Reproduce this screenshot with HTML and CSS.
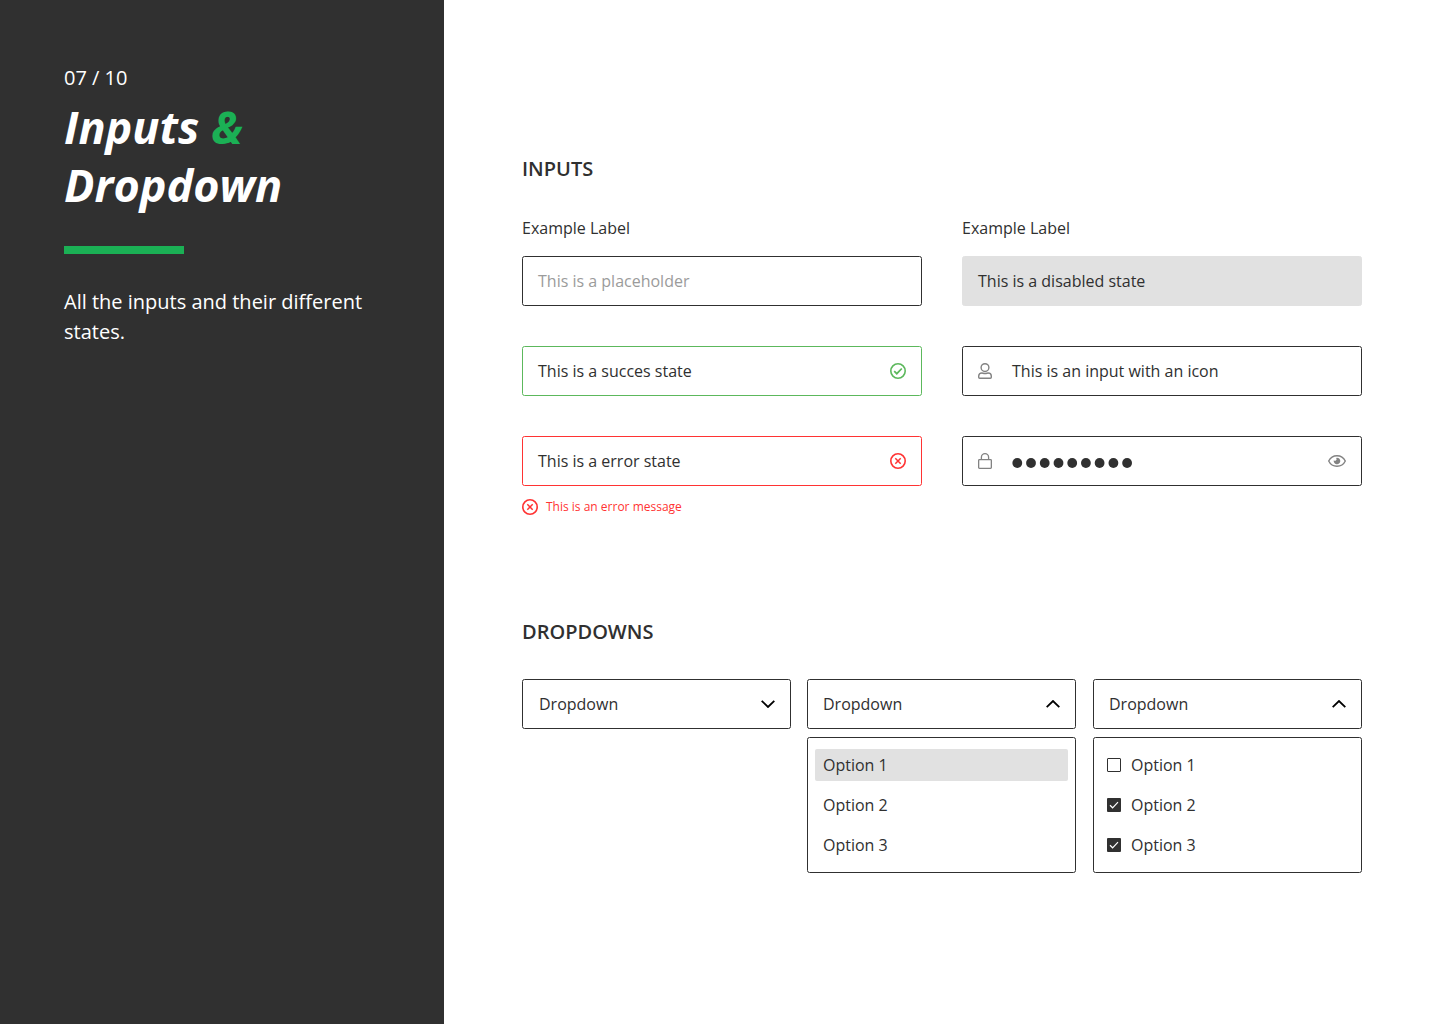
FILE: index.html
```html
<!DOCTYPE html>
<html lang="en">
<head>
<meta charset="utf-8">
<title>Inputs &amp; Dropdown</title>
<link rel="stylesheet" href="styles.css">
</head>
<body>
<aside class="sidebar">
  <p class="page-number">07 / 10</p>
  <h1 class="title">Inputs <span class="accent">&amp;</span><br>Dropdown</h1>
  <div class="rule"></div>
  <p class="intro">All the inputs and their different states.</p>
</aside>
<main class="content">
  <section class="inputs">
    <h2 class="heading">INPUTS</h2>
    <div class="input-grid">
      <div class="group">
        <div class="label">Example Label</div>
        <div class="field placeholder">This is a placeholder</div>
      </div>
      <div class="group">
        <div class="label">Example Label</div>
        <div class="field disabled">This is a disabled state</div>
      </div>
      <div class="field success"><span class="value">This is a succes state</span>
        <svg width="16" height="16" viewBox="0 0 16 16" fill="none" stroke="currentColor"><circle cx="8" cy="8" r="7.2" stroke-width="1.6"/><path d="M4.200 8.100l2.600 2.600 5-5.200" stroke-width="1.7"/></svg>
      </div>
      <div class="field"><svg class="lead" width="14" height="16" viewBox="0 0 14 16" fill="none" stroke="currentColor" stroke-width="1.4"><circle cx="7" cy="4.600" r="3.900"/><path d="M3.900 10C2 10 .7 11.300.7 13.100v1.200c0 .7.3 1 1 1h10.600c.7 0 1-.3 1-1v-1.200c0-1.800-1.300-3.100-3.200-3.100-1 0-1.500.5-3.100.5S4.900 10 3.900 10z"/></svg><span class="value">This is an input with an icon</span></div>
      <div class="group">
        <div class="field error"><span class="value">This is a error state</span>
          <svg width="16" height="16" viewBox="0 0 16 16" fill="none" stroke="currentColor"><circle cx="8" cy="8" r="7.2" stroke-width="1.6"/><path d="M5.300 5.300l5.400 5.400m0-5.400l-5.400 5.400" stroke-width="1.5"/></svg>
        </div>
        <div class="message">
          <svg width="16" height="16" viewBox="0 0 16 16" fill="none" stroke="currentColor"><circle cx="8" cy="8" r="7.2" stroke-width="1.6"/><path d="M5.300 5.300l5.400 5.400m0-5.400l-5.400 5.400" stroke-width="1.5"/></svg>
          <span>This is an error message</span>
        </div>
      </div>
      <div class="field"><svg class="lead" width="14" height="16" viewBox="0 0 14 16" fill="none" stroke="currentColor" stroke-width="1.3"><rect x=".65" y="6.650" width="12.7" height="8.700" rx=".8"/><path d="M3.400 6.500V4.300a3.600 3.600 0 0 1 7.200 0v2.200"/></svg><span class="value"><svg class="dots" width="121" height="10" viewBox="0 0 121 10" fill="currentColor"><circle cx="5.300" cy="5" r="4.900"/><circle cx="19" cy="5" r="4.900"/><circle cx="32.700" cy="5" r="4.900"/><circle cx="46.500" cy="5" r="4.900"/><circle cx="60.200" cy="5" r="4.900"/><circle cx="73.900" cy="5" r="4.900"/><circle cx="87.600" cy="5" r="4.900"/><circle cx="101.400" cy="5" r="4.900"/><circle cx="115.100" cy="5" r="4.900"/></svg></span>
        <svg class="eye" width="18" height="12" viewBox="0 0 18 12"><path d="M.7 6C2.300 2.700 5.400.7 9 .7S15.700 2.700 17.300 6C15.700 9.300 12.600 11.300 9 11.300S2.300 9.300.7 6z" fill="none" stroke="currentColor" stroke-width="1.4"/><path d="M9 2.700a3.300 3.300 0 1 1-3.200 2.500 1.600 1.600 0 0 0 2.300-2.300z" fill="currentColor"/></svg>
      </div>
    </div>
  </section>
  <section class="dropdowns">
    <h2 class="heading">DROPDOWNS</h2>
    <div class="dropdown-grid">
      <div class="field closed"><span class="value">Dropdown</span><svg class="chevron" width="14" height="8" viewBox="0 0 14 8"><path d="M.7.800L7 7 13.300.800"/></svg></div>
      <div class="group">
        <div class="field"><span class="value">Dropdown</span><svg class="chevron" width="14" height="8" viewBox="0 0 14 8"><path d="M.7 7.200L7 1l6.300 6.200"/></svg></div>
        <div class="menu">
          <div class="option selected">Option 1</div>
          <div class="option">Option 2</div>
          <div class="option">Option 3</div>
        </div>
      </div>
      <div class="group">
        <div class="field"><span class="value">Dropdown</span><svg class="chevron" width="14" height="8" viewBox="0 0 14 8"><path d="M.7 7.200L7 1l6.300 6.200"/></svg></div>
        <div class="menu checks">
          <div class="option"><span class="box"></span>Option 1</div>
          <div class="option"><span class="box checked"><svg width="14" height="14" viewBox="0 0 14 14"><path d="M3 7.300l2.600 2.500L11 4.200"/></svg></span>Option 2</div>
          <div class="option"><span class="box checked"><svg width="14" height="14" viewBox="0 0 14 14"><path d="M3 7.300l2.600 2.500L11 4.200"/></svg></span>Option 3</div>
        </div>
      </div>
    </div>
  </section>
</main>
</body>
</html>
```
FILE: styles.css
```css
* { box-sizing: border-box; }
body {
  margin: 0;
  height: 1024px;
  display: flex;
  background: #fff;
  color: #303030;
  font: 16px/24px "Open Sans", sans-serif;
}
h1, h2, p { margin: 0; }
svg { display: block; flex: none; }
.sidebar {
  width: 444px;
  flex: none;
  padding: 63px 64px 0;
  background: #303030;
  color: #fff;
}
.page-number { font-size: 20px; line-height: 30px; }
.title {
  margin-top: 5px;
  font-size: 45px;
  line-height: 58px;
  font-weight: 700;
  font-style: italic;
  white-space: nowrap;
}
.accent { color: #1bb055; }
.rule {
  width: 120px;
  height: 8px;
  margin-top: 32px;
  background: #1bb055;
}
.intro {
  margin-top: 33px;
  font-size: 20px;
  line-height: 30px;
}
.content { width: 918px; padding: 154px 0 0 78px; }
.heading { font-size: 20px; line-height: 30px; font-weight: 600; }
.input-grid {
  display: grid;
  grid-template-columns: 400px 400px;
  gap: 40px;
  align-items: start;
  margin-top: 32px;
}
.label { margin-bottom: 16px; }
.field {
  display: flex;
  align-items: center;
  height: 50px;
  padding: 0 15px;
  border: 1px solid #303030;
  border-radius: 2.5px;
}
.value { flex: 1; }
.placeholder { color: #9b9b9b; }
.disabled { background: #e1e1e1; border-color: #e1e1e1; }
.success { border-color: #5cb85c; }
.success svg { color: #5cb85c; }
.error { border-color: #ff3333; }
.error svg { color: #ff3333; }
.lead { margin-right: 20px; color: #828282; }
.eye { color: #828282; }
.dots { margin-top: 3px; }
.message {
  display: flex;
  align-items: center;
  gap: 8px;
  margin-top: 12px;
  color: #ff3333;
  font-size: 12px;
  line-height: 18px;
}
.dropdowns { margin-top: 101px; }
.dropdown-grid {
  display: grid;
  grid-template-columns: 285px 286px 269px;
  align-items: start;
  margin-top: 32px;
}
.dropdown-grid .field, .menu { width: 269px; }
.closed { padding-left: 16px; }
.chevron { fill: none; stroke: #000; stroke-width: 1.8; }
.menu {
  display: grid;
  gap: 8px;
  height: 136px;
  margin-top: 8px;
  padding: 11px 7px;
  border: 1px solid #303030;
  border-radius: 2.5px;
}
.option {
  display: flex;
  align-items: center;
  height: 32px;
  padding: 0 8px;
  border-radius: 2px;
}
.selected { background: #e1e1e1; }
.checks .option { padding-left: 6px; gap: 10px; }
.box {
  width: 14px;
  height: 14px;
  border: 1px solid #303030;
  border-radius: 1px;
}
.checked { border: 0; background: #303030; }
.box path { fill: none; stroke: #fff; stroke-width: 1.2; }
```
